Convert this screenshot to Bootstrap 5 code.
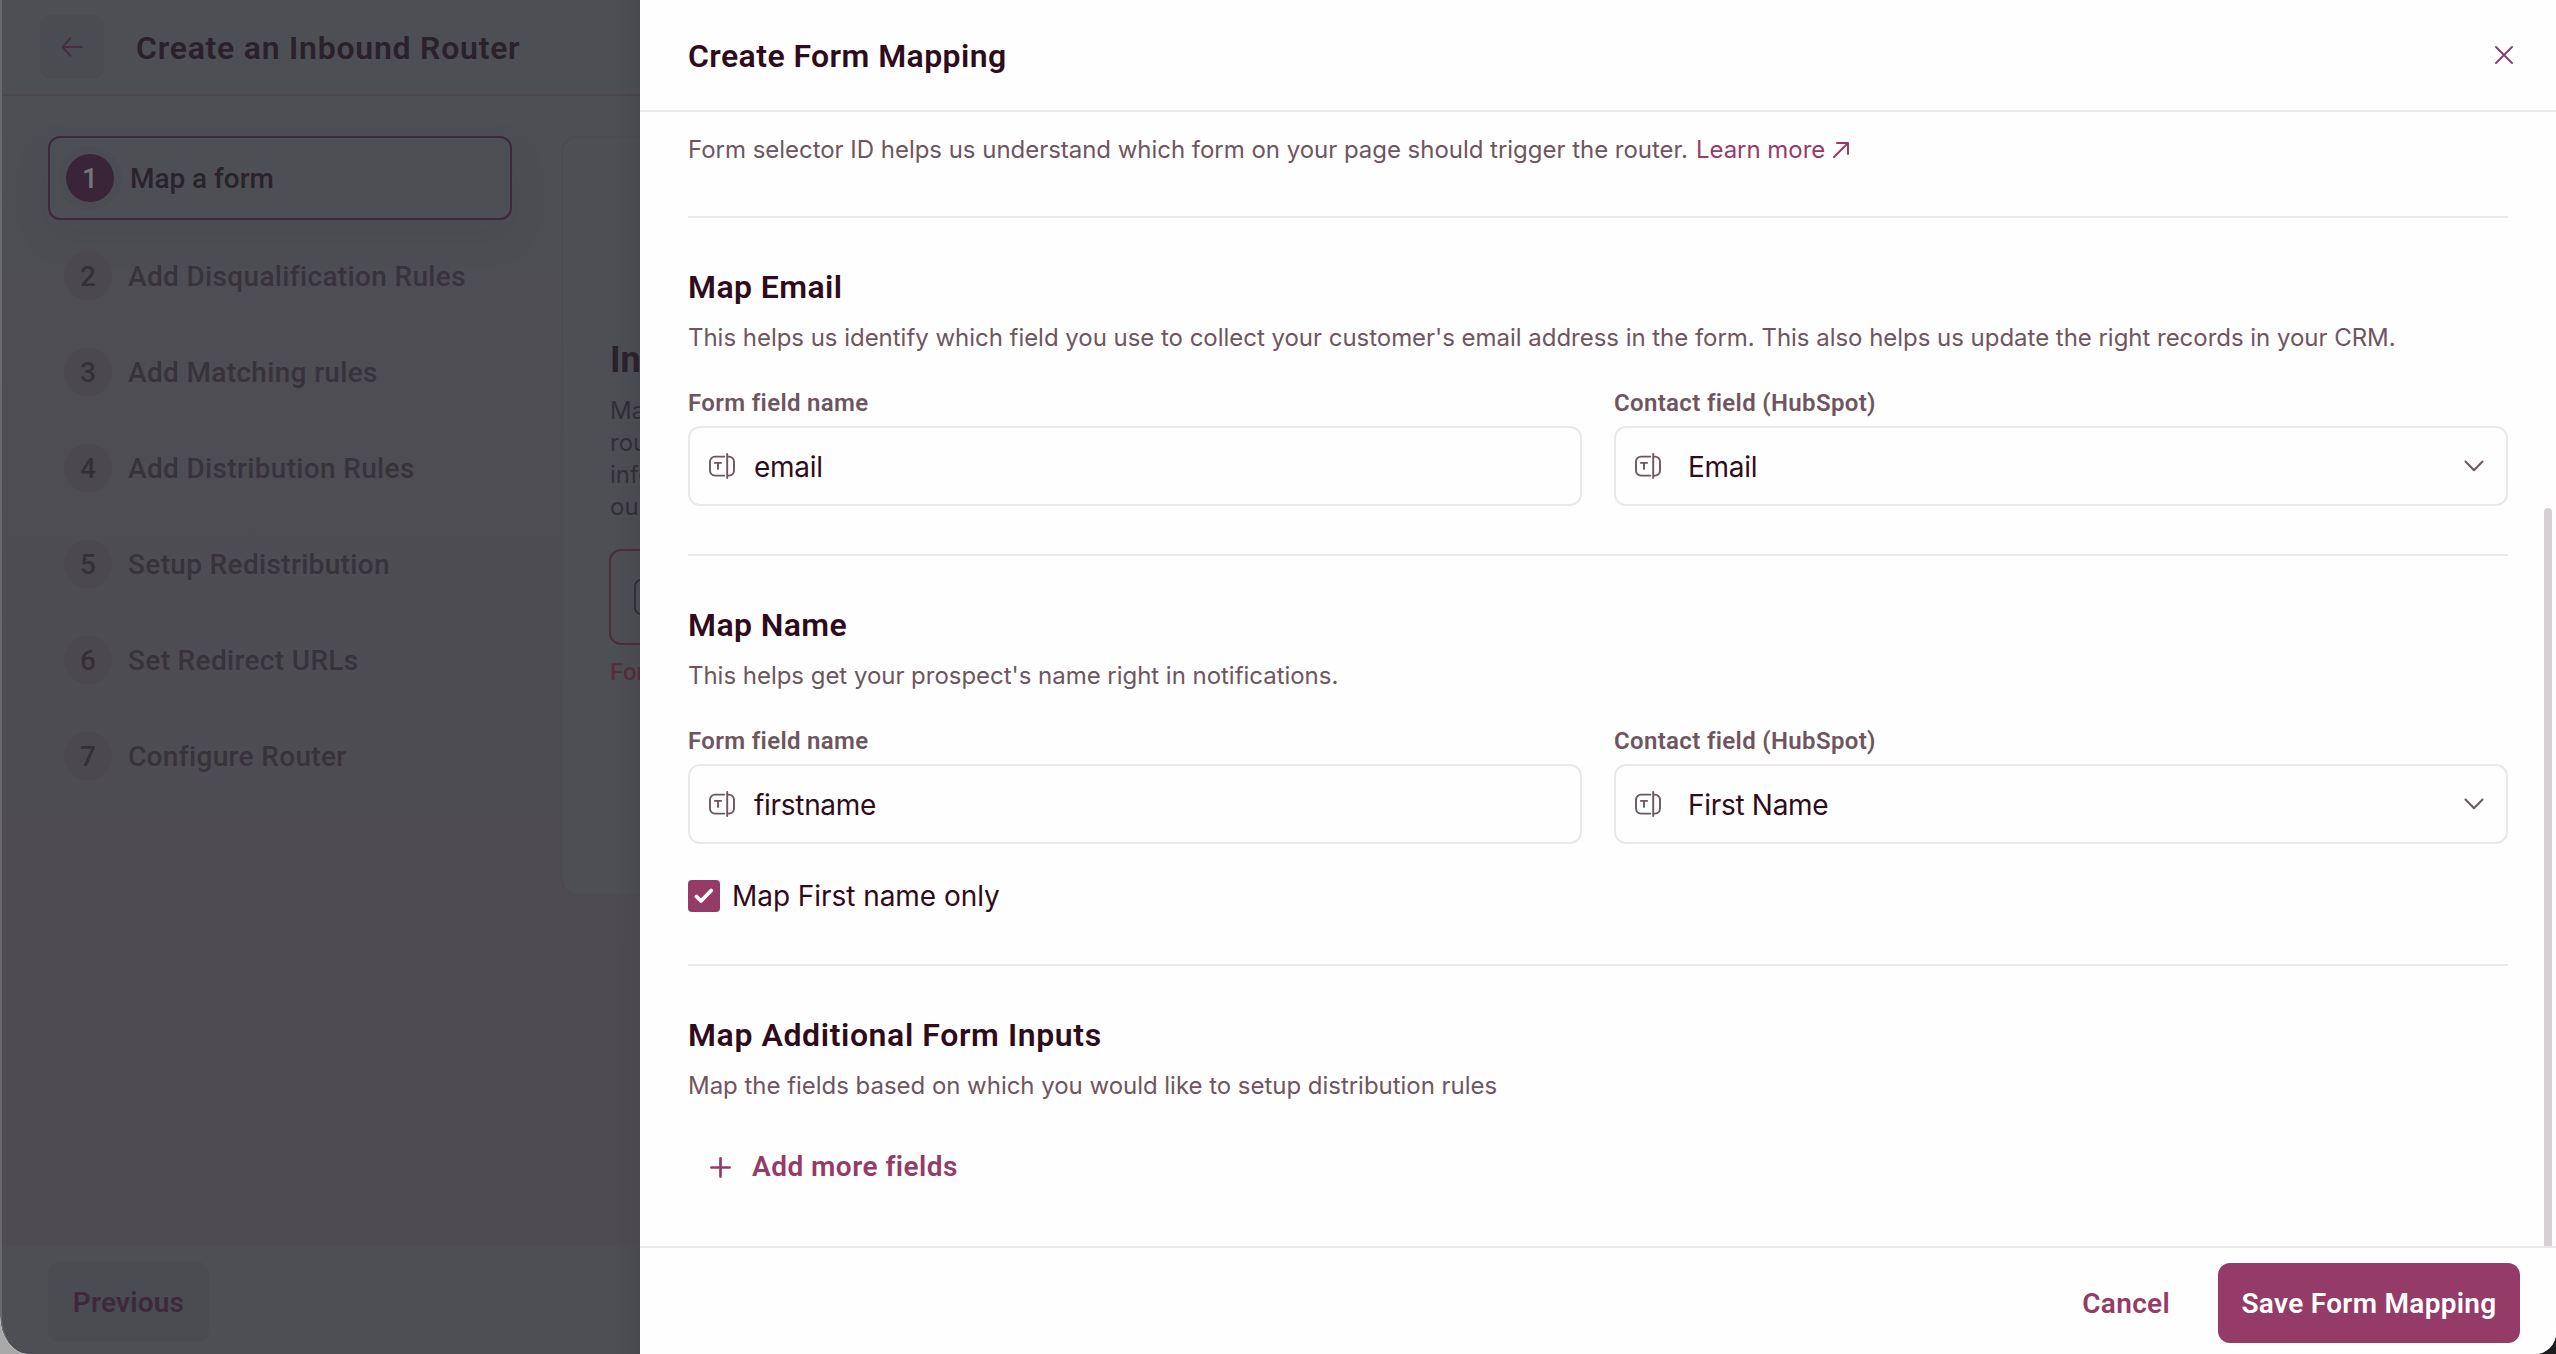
<!DOCTYPE html>
<html lang="en">
<head>
<meta charset="utf-8">
<title>Create Form Mapping</title>
<link href="https://cdn.jsdelivr.net/npm/bootstrap@5.3.0/dist/css/bootstrap.min.css" rel="stylesheet">
<style>
  :root { --ink:#2f0c1b; --muted:#6d5661; --accent:#953b67; --line:#ece7e9; }
  html, body { height:100%; overflow:hidden; }
  body { background:linear-gradient(90deg,#a9a9a9 0 50%,#1c1c1e 50%); font-family:Inter,sans-serif; color:var(--ink); line-height:1; }
  .window { height:1354px; border-bottom-left-radius:28px 38px; border-bottom-right-radius:21px; overflow:hidden; background:#fefefe; }
  .hd { font-family:Roboto,sans-serif; font-weight:600; white-space:nowrap; }
  .pane { width:640px; flex:none; overflow:hidden; border-left:2px solid #69696d; border-bottom-left-radius:28px 38px; background:linear-gradient(180deg,#4d4f54 96px,#4d4d53 330px,#4e4c52 1000px,#4e4c52 1246px); }
  .pane::after { content:""; position:absolute; top:0; right:0; width:28px; height:100%; background:linear-gradient(90deg,transparent,rgba(40,30,40,.1)); }
  .pane-top { height:96px; border-bottom:2px solid #4b474d; background:#4d4f54; padding-left:38px; }
  .back-btn { width:64px; height:64px; border-radius:12px; background:#4b4c51; }
  .pane-title { font-size:32px; color:#2a212b; letter-spacing:.76px; margin-left:32px; padding-top:2px; }
  .pane-main { height:1150px; padding:40px 0 0 46px; }
  .steps { width:464px; flex:none; }
  .step { height:96px; padding:0 0 16px 16px; font:500 28px Roboto,sans-serif; color:#38333b; letter-spacing:.34px; white-space:nowrap; }
  .step .num { width:48px; height:48px; margin-right:16px; border-radius:50%; background:#4b494f; letter-spacing:0; color:#353038; }
  .step.active { height:84px; margin-bottom:8px; padding:0 0 0 16px; border:2px solid #3d293b; border-radius:12px; background:#4d4f54; color:#2a232c; letter-spacing:-.05px; box-shadow:0 16px 40px rgba(60,50,60,.08); }
  .step.active .num { background:#3a2538; color:#77747a; box-shadow:0 0 0 8px #4c4d52; }
  .preview { width:400px; height:760px; flex:none; margin-left:49px; padding:199px 0 0 47px; border:2px solid #4b4b50; border-radius:16px; background:#4d4f54; white-space:nowrap; }
  .preview-title { font-size:36px; line-height:46px; color:#2a212b; font-weight:700; }
  .preview-text { font-size:24px; line-height:32px; color:#332d36; padding-top:12px; }
  .preview-box { height:96px; margin:26px 0 0 -1px; padding-left:23px; border:2px solid #4a2f38; border-radius:12px; }
  .preview-err { font-size:24px; line-height:32px; color:#552e38; margin-top:11px; font-weight:500; }
  .pane-foot { height:108px; padding:16px 0 0 46px; background:#4d4f54; }
  .prev-btn { width:161px; height:80px; border-radius:12px; background:#4b4c51; font-size:28px; color:#3c2a3b; letter-spacing:.2px; padding-top:1px; }
  .drawer { background:#fefefe; }
  .drawer-top { height:112px; border-bottom:2px solid var(--line); padding:0 43px 0 48px; }
  .drawer-title { font-size:32px; letter-spacing:.42px; padding-top:2px; }
  .drawer-body { height:1134px; padding:22px 48px 0; }
  .note { font-size:24px; line-height:32px; color:var(--muted); letter-spacing:-.03px; white-space:nowrap; }
  .note a { color:var(--accent); text-decoration:none; margin-left:8px; }
  .rule { height:2px; background:var(--line); }
  .rule-first { margin-top:50px; }
  .sec { padding-top:49px; }
  .sec-title { font-size:32px; line-height:40px; letter-spacing:.6px; margin-bottom:15px; }
  .sec-title.tight { letter-spacing:.4px; }
  .cols { gap:32px; margin-top:33px; }
  .lbl { font-size:24px; line-height:32px; color:var(--muted); letter-spacing:.34px; margin-bottom:7px; display:block; }
  .field { height:80px; border:2px solid var(--line); border-radius:12px; padding:0 22px 0 19px; font-size:28px; letter-spacing:-.3px; background:#fefefe; }
  .field .val { margin-left:19px; padding-top:1px; }
  .field.pick .val { margin-left:27px; }
  .tick { width:32px; height:32px; border-radius:4px; background:var(--accent); margin-right:12px; }
  .tick-row { margin:36px 0 52px; font-size:28px; letter-spacing:-.05px; }
  .add-btn { height:40px; margin-top:45px; padding-left:22px; font-size:28px; color:var(--accent); letter-spacing:.47px; }
  .plus { margin-right:21px; }
  .drawer-foot { height:108px; border-top:2px solid var(--line); padding:15px 36px 0 0; font-size:28px; }
  .cancel-btn { color:var(--accent); margin-right:48px; letter-spacing:.3px; padding-top:1px; }
  .save-btn { width:302px; height:80px; border-radius:12px; background:var(--accent); color:#fff; letter-spacing:.3px; padding-top:1px; }
  .thumb { position:absolute; right:4px; top:508px; width:8px; height:738px; background:#d9ced3; border-radius:4px 4px 0 0; }
  svg { flex:none; fill:none; stroke-linecap:round; stroke-linejoin:round; }
</style>
<script src="https://cdn.jsdelivr.net/npm/bootstrap@5.3.0/dist/js/bootstrap.bundle.min.js"></script>
</head>
<body>
<svg width="0" height="0" class="position-absolute">
  <symbol id="text-field" viewBox="0 0 26 26">
    <path d="M15.3 3.6H6A5 5 0 0 0 1 8.6v9a5 5 0 0 0 5 5h9.3M18.2 1v24M18.2 3.6h1.8a5 5 0 0 1 5 5v9a5 5 0 0 1-5 5h-1.8M5.9 9.9h6.2M9 9.900v6" stroke="#6d5661" stroke-width="1.900"/>
  </symbol>
</svg>
<div class="window d-flex">
  <aside class="pane position-relative">
    <div class="pane-top d-flex align-items-center">
      <div class="back-btn d-flex align-items-center justify-content-center">
        <svg width="22" height="20" viewBox="0 0 22 20" stroke="#472c42" stroke-width="2"><path d="M21 10H1.5M9.5 1.2L1.5 10l8 8.8"/></svg>
      </div>
      <div class="pane-title hd">Create an Inbound Router</div>
    </div>
    <div class="pane-main d-flex align-items-start">
      <div class="steps">
        <div class="step active d-flex align-items-center"><span class="num d-flex align-items-center justify-content-center">1</span>Map a form</div>
        <div class="pt-2">
        <div class="step d-flex align-items-center"><span class="num d-flex align-items-center justify-content-center">2</span>Add Disqualification Rules</div>
        <div class="step d-flex align-items-center"><span class="num d-flex align-items-center justify-content-center">3</span>Add Matching rules</div>
        <div class="step d-flex align-items-center"><span class="num d-flex align-items-center justify-content-center">4</span>Add Distribution Rules</div>
        <div class="step d-flex align-items-center"><span class="num d-flex align-items-center justify-content-center">5</span>Setup Redistribution</div>
        <div class="step d-flex align-items-center"><span class="num d-flex align-items-center justify-content-center">6</span>Set Redirect URLs</div>
        <div class="step d-flex align-items-center"><span class="num d-flex align-items-center justify-content-center">7</span>Configure Router</div>
        </div>
      </div>
      <div class="preview">
        <div class="preview-title hd">In</div>
        <div class="preview-text">Ma<br>rou<br>info<br>ou</div>
        <div class="preview-box d-flex align-items-center"><svg width="40" height="36" viewBox="0 0 40 36" stroke="#332b35" stroke-width="2"><rect x="1" y="1" width="38" height="34" rx="6"/></svg></div>
        <div class="preview-err hd">For</div>
      </div>
    </div>
    <div class="pane-foot"><div class="prev-btn hd d-flex align-items-center justify-content-center">Previous</div></div>
  </aside>
  <main class="drawer flex-grow-1 position-relative">
    <div class="drawer-top d-flex align-items-center justify-content-between">
      <div class="drawer-title hd">Create Form Mapping</div>
      <svg width="18" height="18" viewBox="0 0 18 18" stroke="#953b67" stroke-width="1.9"><path d="M1 1l16 16M17 1L1 17"/></svg>
    </div>
    <div class="drawer-body">
      <div class="note d-flex align-items-center">Form selector ID helps us understand which form on your page should trigger the router.<a href="#">Learn more</a>
        <svg class="ms-2" width="16" height="16" viewBox="0 0 16 16" stroke="#953b67" stroke-width="2"><path d="M1 15L15 1M4 1h11v11"/></svg>
      </div>
      <div class="rule rule-first"></div>

      <section class="sec">
        <div class="sec-title tight hd">Map Email</div>
        <div class="note">This helps us identify which field you use to collect your customer's email address in the form. This also helps us update the right records in your CRM.</div>
        <div class="cols d-flex">
          <div class="flex-fill w-50"><span class="lbl hd">Form field name</span>
            <div class="field d-flex align-items-center"><svg width="26" height="26"><use href="#text-field"/></svg><span class="val">email</span></div></div>
          <div class="flex-fill w-50"><span class="lbl hd">Contact field (HubSpot)</span>
            <div class="field pick d-flex align-items-center"><svg width="26" height="26"><use href="#text-field"/></svg><span class="val">Email</span>
              <svg class="ms-auto" width="20" height="12" viewBox="0 0 20 12" stroke="#6d5661" stroke-width="2"><path d="M1.5 1.500L10 10.300l8.500-8.800"/></svg></div></div>
        </div>
      </section>
      <div class="rule mt-5"></div>

      <section class="sec">
        <div class="sec-title tight hd">Map Name</div>
        <div class="note">This helps get your prospect's name right in notifications.</div>
        <div class="cols d-flex">
          <div class="flex-fill w-50"><span class="lbl hd">Form field name</span>
            <div class="field d-flex align-items-center"><svg width="26" height="26"><use href="#text-field"/></svg><span class="val">firstname</span></div></div>
          <div class="flex-fill w-50"><span class="lbl hd">Contact field (HubSpot)</span>
            <div class="field pick d-flex align-items-center"><svg width="26" height="26"><use href="#text-field"/></svg><span class="val">First Name</span>
              <svg class="ms-auto" width="20" height="12" viewBox="0 0 20 12" stroke="#6d5661" stroke-width="2"><path d="M1.5 1.500L10 10.300l8.500-8.800"/></svg></div></div>
        </div>
        <div class="tick-row d-flex align-items-center">
          <span class="tick d-flex align-items-center justify-content-center"><svg width="20" height="16" viewBox="0 0 20 16" stroke="#fff" stroke-width="3.800"><path d="M2.500 8.500L7 13 17.200 2.500"/></svg></span>Map First name only
        </div>
      </section>
      <div class="rule"></div>

      <section class="sec">
        <div class="sec-title hd">Map Additional Form Inputs</div>
        <div class="note">Map the fields based on which you would like to setup distribution rules</div>
        <div class="add-btn hd d-flex align-items-center"><svg class="plus" width="21" height="21" viewBox="0 0 21 21" stroke="#953b67" stroke-width="2.700"><path d="M10.500 1.400v18.200M1.400 10.500h18.200"/></svg>Add more fields</div>
      </section>
    </div>
    <div class="drawer-foot d-flex align-items-start justify-content-end">
      <div class="d-flex align-items-center"><div class="cancel-btn hd">Cancel</div><div class="save-btn hd d-flex align-items-center justify-content-center">Save Form Mapping</div></div>
    </div>
    <div class="thumb"></div>
  </main>
</div>
</body>
</html>
